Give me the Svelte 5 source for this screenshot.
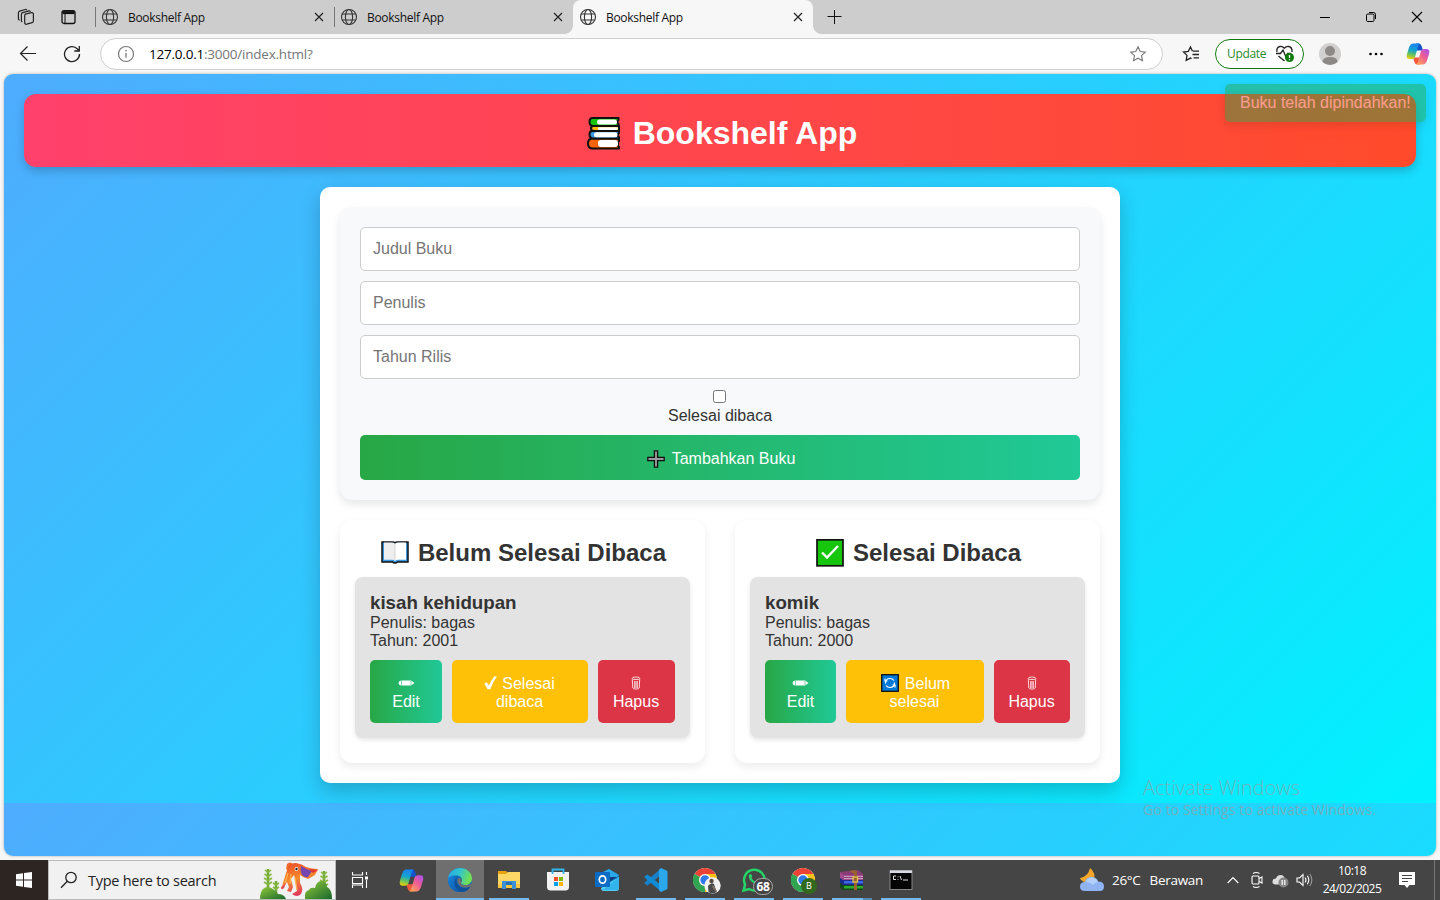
<script>
  const tabs = [{ active: false }, { active: false }, { active: true }];
  const fields = ['Judul Buku', 'Penulis', 'Tahun Rilis'];
  const shelves = [
    { icon: 'book', title: 'Belum Selesai Dibaca', name: 'kisah kehidupan', year: 2001, move: 'check', a: 'Selesai', b: 'dibaca', cols: '72px 136px 77px' },
    { icon: 'done', title: 'Selesai Dibaca', name: 'komik', year: 2000, move: 'cycle', a: 'Belum', b: 'selesai', cols: '71px 138px 76px' }
  ];
  const apps = [
    { id: 'copilot' }, { id: 'edge', on: true, run: true }, { id: 'folder', run: true }, { id: 'store' }, { id: 'outlook' },
    { id: 'code', run: true }, { id: 'chrome', run: true, who: true }, { id: 'whatsapp', run: true },
    { id: 'chrome', run: true }, { id: 'winrar', run: true, stack: true }, { id: 'cmd', run: true }
  ];
</script>

{#snippet globe()}
  <svg class="globe" width="18" height="18" viewBox="0 0 18 18" fill="none" stroke="#333" stroke-width="1.1">
    <circle cx="9" cy="9" r="7.5" /><ellipse cx="9" cy="9" rx="3.6" ry="7.5" /><path d="M2.2 6h13.6M2.2 12h13.6" />
  </svg>
{/snippet}

{#snippet copilot(size)}
  <svg width={size} height={size} viewBox="0 0 24 24">
    <defs>
      <linearGradient id="cpa" x1=".3" y1="0" x2=".1" y2="1"><stop offset="0" stop-color="#1687f0" /><stop offset=".4" stop-color="#18a5c9" /><stop offset=".68" stop-color="#6dc45b" /><stop offset="1" stop-color="#ffd000" /></linearGradient>
      <linearGradient id="cpb" x1="1" y1="0" x2=".2" y2="1"><stop offset="0" stop-color="#a052f5" /><stop offset=".5" stop-color="#ee5b94" /><stop offset="1" stop-color="#ffa45c" /></linearGradient>
    </defs>
    <path d="M7 15.500l1.300 4.200Q9 22.500 11.500 22.500H14l2-7z" fill="#f2593c" />
    <path d="M17 8.500l-1.300-4.200Q15 1.500 12.500 1.500H10l-2 7z" fill="#1453c9" />
    <path d="M13 1.500H7.500Q4.300 1.500 3 5.500L1 12q-1.300 5 2.500 5h2.700q2.300 0 3-2.500L12 4.500q.6-2 2-2.900z" fill="url(#cpa)" />
    <path d="M11 22.500h5.500q3.200 0 4.500-4L23 12q1.300-5-2.500-5h-2.700q-2.300 0-3 2.500L12 19.500q-.6 2-2 2.900z" fill="url(#cpb)" />
  </svg>
{/snippet}

{#snippet chrome()}
  <svg width="26" height="26" viewBox="0 0 26 26">
    <circle cx="13" cy="13" r="12" fill="#fff" />
    <path d="M13 13L2.600 7A12 12 0 0 1 23.400 7z" fill="#ea4335" />
    <path d="M13 13L23.400 7A12 12 0 0 1 13 25z" fill="#fbc116" />
    <path d="M13 13V25A12 12 0 0 1 2.600 7z" fill="#31a452" />
    <path d="M13 7h10.400L18.200 16 13 25 17.700 15.800z" fill="#fbc116" /><path d="M2.600 7L8 16l5 3-3.100 5.600A12 12 0 0 1 2.600 7z" fill="#31a452" />
    <circle cx="13" cy="13" r="6" fill="#fff" /><circle cx="13" cy="13" r="4.700" fill="#3079e8" />
  </svg>
{/snippet}

{#snippet appIcon(app)}
  {#if app.id === 'copilot'}
    {@render copilot(25)}
  {:else if app.id === 'edge'}
    <svg width="26" height="26" viewBox="0 0 26 26">
      <defs>
        <linearGradient id="eg1" x1="0" y1="0" x2="1" y2=".3"><stop offset="0" stop-color="#27a7e8" /><stop offset=".5" stop-color="#2fc4cf" /><stop offset="1" stop-color="#72e053" /></linearGradient>
        <linearGradient id="eg2" x1="0" y1="0" x2="1" y2="1"><stop offset="0" stop-color="#1683dc" /><stop offset="1" stop-color="#0e559f" /></linearGradient>
      </defs>
      <circle cx="13" cy="13" r="12" fill="#0f6cbd" />
      <path d="M1 12C1.800 5 7 1 13 1c7 0 12 5 12 10.500 0 4-3 6.500-6.500 6.500-3 0-4.500-1.200-4.500-2 0-.6 1-1.200 1-3 0-2.500-2.400-4.500-5.600-4.500C5 8.500 2 10 1 12z" fill="url(#eg1)" />
      <path d="M1 13c0-3.500 4-4.800 7.200-4.500C6 10.500 6 20 15.500 24.700 8 26.500 1 21 1 13z" fill="url(#eg2)" />
      <path d="M10.700 11C8 13 10 19.500 15.500 20.700c3 .6 6-.3 8.300-1.800-2 4-5.800 6.100-8.600 5.900C5.500 21.500 6 12 10.700 11z" fill="#104f9a" />
      <path d="M10.800 11.500c2-1.400 4.400.2 3.800 2.500-.2.900-.6 1.400-.6 2 0 1 1.800 2.200 4.500 2.200 2.500 0 5-.8 7.500-2.200v1.500l-2 1.400c-3.500 2.400-8.500 2-10.800.1-2.600-2-3.500-5-2.400-7.500z" fill="#6f6f6f" />
    </svg>
  {:else if app.id === 'folder'}
    <svg width="26" height="24" viewBox="0 0 26 24">
      <path d="M2 3h8l2 2h-1v3H2z" fill="#e8a30f" /><path d="M2 6h8l2-2h12v16H2z" fill="#ffd767" /><path d="M2 16h22v4H2z" fill="#fbc640" />
      <path d="M6 21v-8h14v8h-4v-4h-6v4z" fill="#3d8fd8" /><path d="M10 14h6v3h-6z" fill="#2372b9" />
    </svg>
  {:else if app.id === 'store'}
    <svg width="26" height="26" viewBox="0 0 26 26">
      <path d="M2 5h22v15q0 3-3 3.500H5Q2 23 2 20z" fill="#f3f3f3" /><path d="M7.500 7V2.500h11V7" fill="none" stroke="#2fb5e8" stroke-width="1.800" />
      <path d="M9 10h4v4H9z" fill="#ef5027" /><path d="M14 10h4v4h-4z" fill="#7fb900" /><path d="M9 15h4v4H9z" fill="#00a2ed" /><path d="M14 15h4v4h-4z" fill="#fdb700" />
    </svg>
  {:else if app.id === 'outlook'}
    <svg width="26" height="26" viewBox="0 0 26 26">
      <path d="M4 9L15 2l10 7v8H4z" fill="#1473c8" /><path d="M7 6l8-4 10 6-8 7z" fill="#28a8e9" /><path d="M8 10h15L10 19z" fill="#0b3d80" />
      <path d="M25 10v11q0 3-3 3H10q-3 0-3-3z" fill="#50d0f5" /><path d="M25 10L9 23h13q3 0 3-3z" fill="#31b5ec" />
      <rect x="1" y="5" width="15" height="15" rx="1" fill="#0a6cc4" /><ellipse cx="8.500" cy="12.500" rx="3.200" ry="3.700" fill="none" stroke="#fff" stroke-width="1.700" />
    </svg>
  {:else if app.id === 'code'}
    <svg width="26" height="26" viewBox="0 0 26 26">
      <path d="M18 1.500V8L4.500 18.500 1.500 16.500V15.500z" fill="#1581c8" /><path d="M18 24.500V18L4.500 7.500 1.500 9.500V10.500z" fill="#118bd6" />
      <path d="M18 1l6.500 3v18L18 25l-2-1.500V2.500z" fill="#2ba7ee" />
    </svg>
  {:else if app.id === 'chrome'}
    {@render chrome()}
    {#if app.who}
      <svg class="badge-photo" width="17" height="17" viewBox="0 0 17 17"><circle cx="8.500" cy="8.500" r="8.200" fill="#f2f2f2" /><circle cx="7.500" cy="4" r="2.200" fill="#5b4a42" /><path d="M4 9q3-4 6-2l2.500 8q-4.500 3-8 0z" fill="#494a4b" /><path d="M9 8l4 6-1 1-4-5z" fill="#806f62" /></svg>
    {:else}<span class="badge-b">B</span>{/if}
  {:else if app.id === 'whatsapp'}
    <svg width="26" height="26" viewBox="0 0 26 26">
      <path d="M2.500 23.500l1.600-6A10.300 10.300 0 1 1 8.300 22z" fill="none" stroke="#25d366" stroke-width="2.500" />
      <path d="M8 8c1.500-2 2.500-1 3 .5.5 1.300 0 1.500-.6 2.300 1 2 2.400 3.200 4.300 4 .9-.8 1-1.600 2-1.200 2 .8 2.500 1.200 1.800 2.500C15 20 6.500 13 8 8z" fill="#25d366" />
    </svg>
    <span class="badge-n">68</span>
  {:else if app.id === 'winrar'}
    <svg width="26" height="26" viewBox="0 0 26 26">
      <path d="M1 5l18-2 5 4v6H4z" fill="#8a3c76" /><path d="M4 8h20v5H4L1 11V5z" fill="#a44a8c" /><path d="M5 9h19v3H5z" fill="#c9a0bd" /><path d="M5 10.500h19" stroke="#8a3c76" />
      <path d="M1 11l3 2h20v5H4l-3-2z" fill="#1b2a8c" /><path d="M5 14h19v2.500H5z" fill="#3c68e6" />
      <path d="M1 16l3 2h20v5H4l-3-3z" fill="#12461b" /><path d="M5 19h19v2.500H5z" fill="#2dac2d" />
      <path d="M15 3l3 1v19h-3V7l-5-3z" fill="#9a6231" /><rect x="14" y="10" width="4.500" height="5" fill="none" stroke="#e2c04c" stroke-width="1.300" />
    </svg>
  {:else}
    <svg width="26" height="24" viewBox="0 0 26 24">
      <rect x="2" y="2.500" width="22" height="19" fill="#050505" stroke="#888" /><path d="M2 2.500h22v2.500H2z" fill="#d8dce2" />
      <path d="M8 8H5.500v3.500H8M10 8.500v.8M10 11v.8M12 8l1.500 4M15 12h5" stroke="#ddd" fill="none" />
    </svg>
  {/if}
{/snippet}

{#snippet star()}<path d="M9 1.800l2.200 4.700 5.100.6-3.800 3.500 1 5.100L9 13.200l-4.500 2.500 1-5.100L1.700 7.100l5.100-.6z" />{/snippet}

<div class="screen">
  <header class="strip">
    <div class="strip-tools">
      <svg width="18" height="18" viewBox="0 0 18 18" fill="none" stroke="#222" stroke-width="1.200" stroke-linejoin="round" stroke-linecap="round">
        <path d="M8.200 6.200l6.300-1.500q1.600-.3 1.900 1.100V13q0 1.300-1.300 1.700l-5.400 1.500q-1.800.4-2-1.300V7.900q0-1.300.5-1.700zM4.900 13.700q-.5-.3-.5-1.300V6.300q0-1.300 1.200-1.700L12 2.900q.8-.1 1.200.4M2.200 12q-.8-.5-.8-1.500V5q0-1.500 1.200-1.900L8.300 1.500q.8-.2 1.300.2" />
      </svg>
      <svg width="16" height="16" viewBox="0 0 16 16" fill="none" stroke="#111" stroke-width="1.300"><rect x="1" y="1.700" width="13" height="12.800" rx="2" /><path d="M1.500 3.600h12" stroke-width="3" /><path d="M4 5v9.500" stroke-width="1" /></svg>
    </div>
    {#each tabs as tab}
      <div class="tab" class:active={tab.active}>
        {@render globe()}
        <span class="tab-name">Bookshelf App</span>
        <svg width="10" height="10" viewBox="0 0 10 10" stroke="#222" stroke-width="1.200"><path d="M1 1l8 8M9 1L1 9" /></svg>
      </div>
    {/each}
    <svg class="plus" width="16" height="16" viewBox="0 0 16 16" stroke="#111"><path d="M7.500 1v14M.5 7.500h14" /></svg>
    <div class="win">
      <svg width="12" height="12" viewBox="0 0 12 12" stroke="#000"><path d="M1 6.500h10" /></svg>
      <svg width="12" height="12" viewBox="0 0 12 12" stroke="#000" fill="none"><rect x="1.500" y="3" width="7.500" height="7.500" rx="1.200" /><path d="M4 1.500h4.500q2 0 2 2V8" /></svg>
      <svg width="12" height="12" viewBox="0 0 12 12" stroke="#000" stroke-width="1.100"><path d="M1 1l10 10M11 1L1 11" /></svg>
    </div>
  </header>

  <div class="toolbar">
    <svg class="back" width="18" height="18" viewBox="0 0 18 18" fill="none" stroke="#222" stroke-width="1.200"><path d="M17 8.500H1.500M8.500 1.500l-7 7 7 7" /></svg>
    <svg class="reload" width="18" height="18" viewBox="0 0 18 18" fill="none" stroke="#222" stroke-width="1.300"><path d="M16.500 9A7.500 7.500 0 1 1 14.500 4l1.500 1.800M16.300 1v5h-5" /></svg>
    <div class="address">
      <svg width="18" height="18" viewBox="0 0 18 18" fill="none" stroke="#777" stroke-width="1.200"><circle cx="9" cy="9" r="7.500" /><path d="M9 8v4.800" stroke-width="1.300" /><circle cx="9" cy="5.700" r=".6" fill="#777" stroke-width=".5" /></svg>
      <span class="url"><b>127.0.0.1</b>:3000/index.html?</span>
      <svg width="18" height="18" viewBox="0 0 18 18" fill="none" stroke="#777" stroke-width="1.100">{@render star()}</svg>
    </div>
    <svg class="favs" width="18" height="18" viewBox="0 0 18 18" fill="none" stroke="#222" stroke-width="1.300"><path d="M10.500 6.200L8.500 2 6.300 6.300 1.500 7l3.500 3.400-.8 5 4.300-2.300 1 .5M11 6.200h6M10.500 9.500H17M11.500 12.800H17" /></svg>
    <div class="update">
      <span>Update</span>
      <svg width="20" height="18" viewBox="0 0 20 18" fill="none" stroke="#222" stroke-width="1.300">
        <path d="M2 7Q1 2.500 5 1.500q2.500-.5 4.200 1.700Q11.500 1 13.800 1.500 17.500 2.500 17 7M1 8.500h4.500L8 5l3 7 1.500-3.500h3M3.500 11L9.500 16" />
        <circle cx="14.500" cy="12.500" r="4.500" fill="#0f7b0f" stroke="none" /><path d="M14.500 10v3M14.500 14.200v1" stroke="#fff" />
      </svg>
    </div>
    <svg class="avatar" width="22" height="24" viewBox="0 0 22 24"><circle cx="11" cy="12" r="11" fill="#d2d0ce" /><circle cx="11" cy="9" r="5" fill="#8c8987" /><path d="M3.500 20Q3.500 15 11 15t7.500 5Q15 23 11 23T3.500 20z" fill="#8c8987" /></svg>
    <svg class="dots" width="16" height="6" viewBox="0 0 16 6"><circle cx="2.500" cy="3" r="1.300" /><circle cx="8" cy="3" r="1.300" /><circle cx="13.500" cy="3" r="1.300" /></svg>
    {@render copilot(24)}
  </div>

  <main class="page">
    <div class="banner">
      <svg width="36" height="36" viewBox="0 0 36 36" stroke="#111" stroke-width="2" stroke-linejoin="round">
        <path d="M6 23.500h27v2.500l-1 1v4l1 1v1.500H6Q2 33 2 28.500t4-5z" fill="#f7630c" /><path d="M6 16h27v2l-1 1v2l1 1v1.500H7Q3.500 23 3.500 19.500T6 16z" fill="#3a96dd" /><path d="M7 11h26v5H8Q5 15.500 5 13.500T7 11z" fill="#ffb900" /><path d="M6 3h26.500v2l-1 1v2l1 1v2H7Q3.500 10.500 3.500 7T6 3z" fill="#16c60c" />
        <g stroke="none" fill="#fff"><rect x="11" y="4.600" width="20" height="5" rx="2.500" /><rect x="12" y="12.300" width="20" height="2.600" rx="1.300" /><rect x="8" y="17.200" width="23.500" height="5" rx="2.500" /><rect x="12" y="25" width="20" height="7" rx="3" /></g>
      </svg>
      <h1>Bookshelf App</h1>
    </div>

    <div class="container">
      <form class="form">
        {#each fields as f}<input class="field" type="text" placeholder={f} />{/each}
        <div class="check"><i class="box"></i><span>Selesai dibaca</span></div>
        <button type="button" class="add">
          <svg width="18" height="18" viewBox="0 0 18 18"><path d="M7.400 .8h3.200v6.600h6.600v3.200h-6.600v6.600H7.400v-6.600H.8V7.400h6.600z" fill="#9b9b9b" stroke="#111" stroke-width="1.300" /></svg>
          Tambahkan Buku
        </button>
      </form>

      <div class="shelves">
        {#each shelves as s}
          <section class="shelf">
            <h2>
              {#if s.icon === 'book'}
                <svg width="28" height="28" viewBox="0 0 28 28"><path d="M1 3h10.500q1.800 0 2.500 1 .7-1 2.500-1H27v20H16.500q-1 1-2.500 1t-2.500-1H1z" fill="#3a96dd" stroke="#111" stroke-width="1.500" /><path d="M3 3.500H11q3 0 3 2V22q-1-1.200-3-1.200H3z" fill="#eee" /><path d="M25 3.500H17q-3 0-3 2V22q1-1.200 3-1.200h8z" fill="#fff" /><path d="M14 5v16" stroke="#ccc" stroke-width=".8" /></svg>
              {:else}
                <svg width="28" height="28" viewBox="0 0 28 28"><rect x="1" y=".8" width="26" height="26" fill="#16c60c" stroke="#111" stroke-width="1.700" /><path d="M6 13.500l5 5L22 7" fill="none" stroke="#fff" stroke-width="2.400" /></svg>
              {/if}
              <span>{s.title}</span>
            </h2>
            <article class="item">
              <h3>{s.name}</h3>
              <p>Penulis: bagas</p>
              <p>Tahun: {s.year}</p>
              <div class="actions" style="grid-template-columns: {s.cols}">
                <button type="button" class="edit">
                  <span class="ln"><svg width="17" height="8" viewBox="0 0 17 8"><path d="M3 1.500h10l3.500 2.500L13 6.500H3Q.5 6 .5 4T3 1.500z" fill="#fff" /><path d="M3.500 1.500v5M13 2v4" stroke="#25b972" stroke-width=".6" /></svg></span>
                  <span class="ln">Edit</span>
                </button>
                <button type="button" class="move">
                  <span class="ln" class:wide={s.move === 'cycle'}>
                    {#if s.move === 'check'}
                      <svg width="13" height="14" viewBox="0 0 13 14"><path d="M.3 7.500l2.600-1.200 1.900 3.200Q7.500 3.500 10.400.3l2.500.2Q8.700 6 6.300 13.300H3.600z" fill="#fff" /></svg>
                    {:else}
                      <svg width="18" height="18" viewBox="0 0 18 18"><rect x=".7" y=".7" width="16.600" height="16.600" fill="#0078d7" stroke="#111" stroke-width="1.300" /><path d="M4.500 9.500Q4.500 4.500 9 4.500q2.500 0 4 2M13.500 8.500q0 5-4.500 5-2.500 0-4-2M4 4.500v2.500h2.500M14 13.500V11h-2.500" fill="none" stroke="#fff" stroke-width="1.200" /></svg>
                    {/if}
                    {s.a}
                  </span>
                  <span class="ln">{s.b}</span>
                </button>
                <button type="button" class="del">
                  <span class="ln"><svg width="10" height="14" viewBox="0 0 10 14" fill="none" stroke="#fff" stroke-opacity=".8"><path d="M1 2.500Q1 1 5 1t4 1.500Q9 3.500 5 3.500T1 2.500zM1.300 3.500l.5 8.500q0 1 3.200 1t3.200-1l.5-8.500M3.700 5v7M6.300 5v7M5 5v7" /></svg></span>
                  <span class="ln">Hapus</span>
                </button>
              </div>
            </article>
          </section>
        {/each}
      </div>
    </div>
    <div class="toast">Buku telah dipindahkan!</div>
  </main>

  <div class="watermark"><p class="w1">Activate Windows</p><p class="w2">Go to Settings to activate Windows.</p></div>

  <footer class="taskbar">
    <div class="start"><svg width="16" height="16" viewBox="0 0 16 16" fill="#fff"><path d="M0 2.200l7-1v6.300H0zM8 1l8-1v7.500H8zM0 8.500h7v6.300l-7-1zM8 8.500h8V16l-8-1z" /></svg></div>
    <div class="search">
      <svg width="18" height="18" viewBox="0 0 18 18" fill="none" stroke="#222" stroke-width="1.300"><circle cx="11" cy="6.500" r="5.200" /><path d="M7.300 10.300L1 16.800" /></svg>
      <span>Type here to search</span>
      <svg class="reef" width="74" height="38" viewBox="0 0 74 38">
        <defs>
          <linearGradient id="coral" x1="0" y1="0" x2="1" y2="1"><stop offset="0" stop-color="#93c93a" /><stop offset="1" stop-color="#17682c" /></linearGradient>
          <linearGradient id="octo" x1="0" y1="0" x2=".3" y2="1"><stop offset="0" stop-color="#ee4a2a" /><stop offset=".55" stop-color="#f58a2c" /><stop offset="1" stop-color="#e23a5c" /></linearGradient>
        </defs>
        <path d="M9 8v24M17 20v14M65 10v24" stroke="#6fa73a" stroke-width="2.500" /><path d="M6 9l3 2.500L12 9M5.500 13l3.500 2.500 3.500-2.500M5 17l4 2.500 4-2.500M5 21l4 2.500 4-2.500M62 11l3 2.500 3-2.500M61.500 15l3.500 2.500 3.500-2.500M61 19l4 2.500 4-2.500M61 23l4 2.500 4-2.500M14 22l3 2 3-2M14 26l3 2 3-2" stroke="#87b83c" stroke-width="1.600" fill="none" />
        <path d="M1 38Q1 31 4 28q4-4 10 0 4 3 5 5 6 0 8 5z" fill="url(#coral)" /><path d="M46 38q-1-8 4-9 1-3 6-2 1-6 6-7 6 0 6 6 5 2 5 12z" fill="url(#coral)" />
        <path d="M28 3q3-3 6 0 2 3 0 8l-6 9-3 7q-3 3-3-1 4-3 5-8l3-8-3-2z" fill="url(#octo)" />
        <path d="M29 6q3-4 8-4 6 1 10 4 6 2 12 2l-3 6-7 4-5-2-3-2v8q4 6 1 11-4 4-9 0l5-3-1-8-2-8-3 4 2 8-2 5-4-1 2-4-2-5-5 4z" fill="url(#octo)" />
        <path d="M42 5q5 3 11 5l-4 6q-3 1-6-2-2-4-1-9z" fill="#7546b0" /><path d="M50 8l9 1-5 3z" fill="#e3322f" />
        <path d="M29 12l-3 10M32 13l-1 10M36 17l2 12" stroke="#ffb04a" stroke-width="1.300" fill="none" /><circle cx="37.500" cy="8" r="1.900" fill="#fff" /><circle cx="37.500" cy="8" r="1.200" fill="#222" />
      </svg>
    </div>
    <div class="taskview"><svg width="18" height="18" viewBox="0 0 18 18" fill="none" stroke="#fff" stroke-width="1.100"><path d="M1.500 1v3h10V1M1.500 6.500h10v6h-10zM1.500 17v-3h10v3M15.500 1v3M15.500 9v8" /><path d="M14 5.500h3v3h-3z" fill="#fff" stroke="none" /></svg></div>
    <div class="apps">
      {#each apps as app}
        <div class="app" class:on={app.on} class:run={app.run} class:stack={app.stack}>{@render appIcon(app)}</div>
      {/each}
    </div>
    <div class="tray">
      <svg width="26" height="26" viewBox="0 0 26 26"><path d="M11 1q-1 5-5 8-3 2-5 2 1 3 5 4h9q2-10-4-14z" fill="#f5a72a" /><path d="M6 24q-5 0-5-4.500T6 15q1-5 6.500-5T19 14.500q6 0 6 5T20 24z" fill="#8fb3f3" /><path d="M7 15q1-4.500 5.500-4.500T19 15q-3 0-5 3-3-3-7-3z" fill="#b4cffa" /></svg>
      <span class="weather">26°C<span>Berawan</span></span>
      <svg class="up" width="12" height="8" viewBox="0 0 12 8" fill="none" stroke="#fff" stroke-width="1.200"><path d="M.7 7L6 1.500 11.300 7" /></svg>
      <svg class="cam" width="12" height="18" viewBox="0 0 12 18" fill="none" stroke="#fff" stroke-width="1.100"><rect x="1" y="5" width="7" height="8" rx="1" /><path d="M8 7.500l3-1.500v6l-3-1.500M2 2.500Q5 .5 8.500 2.500M2 15.500q3 2 6.500 0" /></svg>
      <svg class="cloud" width="17" height="15" viewBox="0 0 17 15"><path d="M3 11.500Q0 11 .5 8T4 5.500Q5 2 8.500 2t4.500 4q3 0 3 3t-3 2.500z" fill="#ddd" /><circle cx="11.500" cy="9.500" r="5" fill="#858585" /><path d="M10.200 7v5M12.800 7v5" stroke="#fff" stroke-width="1.200" /></svg>
      <svg class="vol" width="17" height="14" viewBox="0 0 17 14" fill="none" stroke="#fff" stroke-width="1.100"><path d="M1 5h2.500L7 1.500v11L3.500 9H1zM9 4.500q2 2.500 0 5M11.300 2.800q3 4.200 0 8.400" /><path d="M13.700 1q4.300 6 0 12" stroke="#999" /></svg>
      <div class="clock"><span>10:18</span><span class="date">24/02/2025</span></div>
      <svg class="note" width="16" height="16" viewBox="0 0 16 16"><path d="M0 0h16v13h-5.500L8 16l-2.500-3H0z" fill="#fff" /><path d="M3 3.500h10M3 6.500h10M3 9.500h6" stroke="#444" /></svg>
      <i class="peek"></i>
    </div>
  </footer>
</div>

<style>
  :global(body) { margin: 0; overflow: hidden; }
  * { box-sizing: border-box; }
  .screen { position: relative; width: 1440px; height: 900px; overflow: hidden; display: flex; flex-direction: column; background: #f7f7f7; font-family: "Open Sans", "Noto Sans", sans-serif; }
  svg { flex: none; display: block; }
  h1, h2, h3, p { margin: 0; }

  .strip { height: 34px; flex: none; background: #cdcdcd; display: flex; align-items: center; }
  .strip-tools { width: 95px; flex: none; display: flex; align-items: center; gap: 26px; padding-left: 17px; }
  .tab { position: relative; width: 239px; height: 34px; flex: none; display: flex; align-items: center; padding: 0 10px 0 6px; }
  .tab:not(.active)::before { content: ""; position: absolute; left: 0; top: 7px; width: 1px; height: 20px; background: #777; }
  .tab-name { flex: 1; margin-left: 9px; font-size: 12px; letter-spacing: -0.3px; color: #111; }
  .tab.active { width: 240px; background: #f7f7f7; border-radius: 8px 8px 0 0; }
  .tab.active::before, .tab.active::after { content: ""; position: absolute; bottom: 0; width: 8px; height: 8px; }
  .tab.active::before { left: -8px; background: radial-gradient(circle at 0 0, #cdcdcd 7.5px, #f7f7f7 8px); }
  .tab.active::after { right: -8px; background: radial-gradient(circle at 100% 0, #cdcdcd 7.5px, #f7f7f7 8px); }
  .plus { margin-left: 14px; }
  .win { margin-left: auto; display: flex; gap: 34px; padding-right: 17px; }

  .toolbar { height: 40px; flex: none; display: flex; align-items: center; }
  .back { margin-left: 19px; }
  .reload { margin-left: 26px; }
  .address { width: 1063px; height: 32px; margin-left: 19px; border: 1px solid #cfcfcf; border-radius: 16px; background: #fff; display: flex; align-items: center; padding: 0 15px 0 16px; }
  .url { flex: 1; margin-left: 14px; font-size: 13.500px; line-height: 18px; padding-bottom: 1px; letter-spacing: -0.22px; color: #767676; }
  .url b { font-weight: 400; color: #000; }
  .favs { margin-left: 19px; }
  .update { width: 89px; height: 30px; margin-left: 15px; border: 1px solid #0f7b0f; border-radius: 15px; background: #fff; display: flex; align-items: center; justify-content: space-between; padding: 0 8px 0 11px; font-size: 12px; color: #2a8a2a; letter-spacing: -.35px; }
  .update span { padding-bottom: 1px; }
  .avatar { margin-left: 15px; }
  .dots { margin-left: 27px; margin-right: 22px; }

  .page { position: relative; width: 1432px; height: 782px; flex: none; margin-left: 4px; padding: 20px; border-radius: 9px; overflow: hidden; background: linear-gradient(135deg, #4facfe, #00f2fe) 0 0 / 100% 729px repeat-y; box-shadow: 0 0 3px rgba(0,0,0,.3); font-family: "Liberation Sans", Arial, sans-serif; font-size: 16px; color: #333; }
  .banner { height: 73px; border-radius: 12px; background: linear-gradient(90deg, #ff416c, #ff4b2b); box-shadow: 0 4px 10px rgba(0,0,0,.2); display: flex; align-items: center; justify-content: center; gap: 11px; padding: 5px 0 0 3px; color: #fff; }
  .banner h1 { font-size: 32px; line-height: 36px; padding-bottom: 1px; }
  .container { width: 800px; height: 596px; margin: 20px auto 0; padding: 20px; border-radius: 10px; background: #fff; box-shadow: 0 8px 20px rgba(0,0,0,.2); }
  .form { height: 293px; padding: 20px; display: flex; flex-direction: column; gap: 10px; border-radius: 12px; background: #f8f9fb; box-shadow: 0 4px 8px rgba(0,0,0,.1); }
  .field { width: 100%; height: 44px; flex: none; border: 1px solid #ccc; border-radius: 5px; padding: 0 12px; background: #fff; font: 16px "Liberation Sans", Arial, sans-serif; }
  .field::placeholder { color: #757575; }
  .check { height: 36px; flex: none; display: flex; flex-direction: column; align-items: center; line-height: 18px; }
  .box { width: 13px; height: 13px; flex: none; margin: 1px 1px 4px 0; border: 1px solid #767676; border-radius: 2.5px; background: #fff; }
  button { border: 0; padding: 0; border-radius: 5px; font: 16px/18px "Liberation Sans", Arial, sans-serif; color: #fff; }
  .add { height: 45px; flex: none; display: flex; align-items: center; justify-content: center; gap: 7px; padding: 2px 0 0 2px; background: linear-gradient(90deg, #28a745, #20c997); }
  .shelves { display: grid; grid-template-columns: 365px 365px; gap: 30px; margin-top: 20px; }
  .shelf { height: 243px; padding: 15px; border-radius: 12px; background: #fff; box-shadow: 0 4px 8px rgba(0,0,0,.08); }
  h2 { height: 32px; margin-bottom: 10px; padding: 4px 0 0 2px; display: flex; align-items: center; justify-content: center; gap: 9px; font-size: 24px; line-height: 28px; }
  .item { height: 161px; padding: 15px; border-radius: 8px; background: #e3e3e3; box-shadow: 0 2px 4px rgba(0,0,0,.1); }
  h3 { height: 22px; font-size: 18.72px; line-height: 21px; }
  p { line-height: 18px; }
  .actions { display: grid; gap: 10px; margin-top: 10px; }
  .actions button { height: 63px; padding-top: 3px; display: flex; flex-direction: column; align-items: center; justify-content: center; }
  .ln { height: 18px; display: flex; align-items: center; gap: 5px; }
  .ln svg { position: relative; top: -1px; }
  .ln.wide { gap: 6px; padding-left: 2px; }
  .edit { background: linear-gradient(90deg, #28a745, #20c997); }
  .move { background: #ffc107; }
  .del { background: #dc3545; }
  .actions .move, .actions .del { padding-right: 1px; }
  .toast { position: absolute; top: 10px; right: 10px; width: 201px; height: 38px; padding: 10px 15px; border-radius: 5px; background: #28a745; color: #fff; line-height: 18px; white-space: nowrap; opacity: .45; box-shadow: 0 4px 8px rgba(0,0,0,.2); }

  .watermark { position: absolute; left: 1143px; top: 774px; color: rgba(150,158,165,.72); white-space: nowrap; }
  .w1 { font-size: 20px; line-height: 28px; font-weight: 300; }
  .w2 { font-size: 14px; line-height: 16px; letter-spacing: .1px; }

  .taskbar { height: 40px; flex: none; margin-top: 4px; background: #454545; display: flex; align-items: stretch; color: #fff; }
  .start { width: 48px; background: #2c2522; display: flex; align-items: center; justify-content: center; }
  .search { position: relative; width: 288px; background: #f1f1f1; border: 1px solid #bbb; display: flex; align-items: center; padding-left: 11px; gap: 10px; color: #222; font-size: 14.500px; white-space: nowrap; }
  .search span { letter-spacing: -.27px; }
  .reef { margin-left: auto; margin-right: 2px; }
  .taskview { width: 51px; display: flex; align-items: center; justify-content: center; padding-right: 3px; }
  .apps { display: flex; gap: 1px; }
  .app { position: relative; width: 48px; display: flex; align-items: center; justify-content: center; }
  .app.on { background: #6f6f6f; }
  .app.run::after { content: ""; position: absolute; left: 4px; right: 4px; bottom: 0; height: 2px; background: #76b9ed; }
  .app.on::after { left: 0; right: 0; }
  .app.stack::after { background: linear-gradient(90deg, #76b9ed 31px, #5488b2 31px); }
  .badge-photo { position: absolute; left: 23px; top: 17px; }
  .badge-b { position: absolute; left: 22px; top: 18px; width: 16px; height: 16px; border-radius: 50%; background: #33691e; font-size: 9px; line-height: 16px; text-align: center; }
  .badge-n { position: absolute; left: 23px; top: 18px; width: 20px; height: 17px; border: 1px solid #aaa; border-radius: 9px; background: #444; font-size: 12px; font-weight: 700; line-height: 15px; text-align: center; letter-spacing: -.4px; }
  .tray { margin-left: auto; display: flex; align-items: center; }
  .weather { width: 93px; margin-left: 7px; display: flex; gap: 9px; font-size: 13.500px; letter-spacing: -.3px; white-space: nowrap; }
  .up { margin-left: 22px; }
  .cam { margin-left: 12px; }
  .cloud { margin-left: 9px; }
  .vol { margin-left: 7px; }
  .clock { width: 60px; margin-left: 9px; display: flex; flex-direction: column; align-items: center; font-size: 12px; line-height: 18px; letter-spacing: -.5px; white-space: nowrap; }
  .note { margin-left: 17px; }
  .peek { width: 1px; height: 40px; margin: 0 5px 0 19px; background: #777; }
</style>
